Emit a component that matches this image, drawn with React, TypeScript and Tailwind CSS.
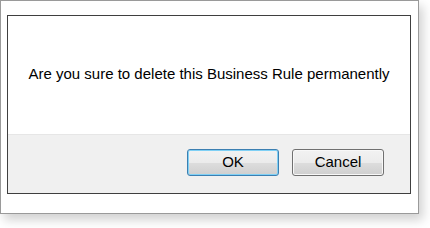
export default function App() {
  const btn =
    'w-[92px] h-[27px] rounded-[3px] text-[15px] text-black bg-[linear-gradient(#f2f2f2_0%,#ebebeb_50%,#dddddd_51%,#cfcfcf_100%)]';

  return (
    <div className="w-[430px] h-[228px] bg-white" style={{ fontFamily: '"Liberation Sans", Arial, sans-serif' }}>
      <div className="w-[419px] h-[214px] border border-[#9a9a9a] bg-white pl-[6px] pt-[14px] shadow-[4px_6px_10px_rgba(0,0,0,0.18)]">
        <div className="w-[404px] h-[179px] border border-[#3f3f3f] flex flex-col">
          <div className="h-[118px] bg-white flex items-center justify-center pb-[1px]">
            <p className="text-[15px] text-black">Are you sure to delete this Business Rule permanently</p>
          </div>
          <div className="flex-1 bg-[#f0f0f0] border-t border-[#e6e6e6] flex justify-end items-start pt-[14px] pr-[26px] gap-[13px]">
            <button className={`${btn} border border-[#3c7fb1] shadow-[inset_0_0_0_1px_#7fd0f5]`}>OK</button>
            <button className={`${btn} border border-[#707070] shadow-[inset_0_0_0_1px_#f8f8f8]`}>Cancel</button>
          </div>
        </div>
      </div>
    </div>
  );
}
